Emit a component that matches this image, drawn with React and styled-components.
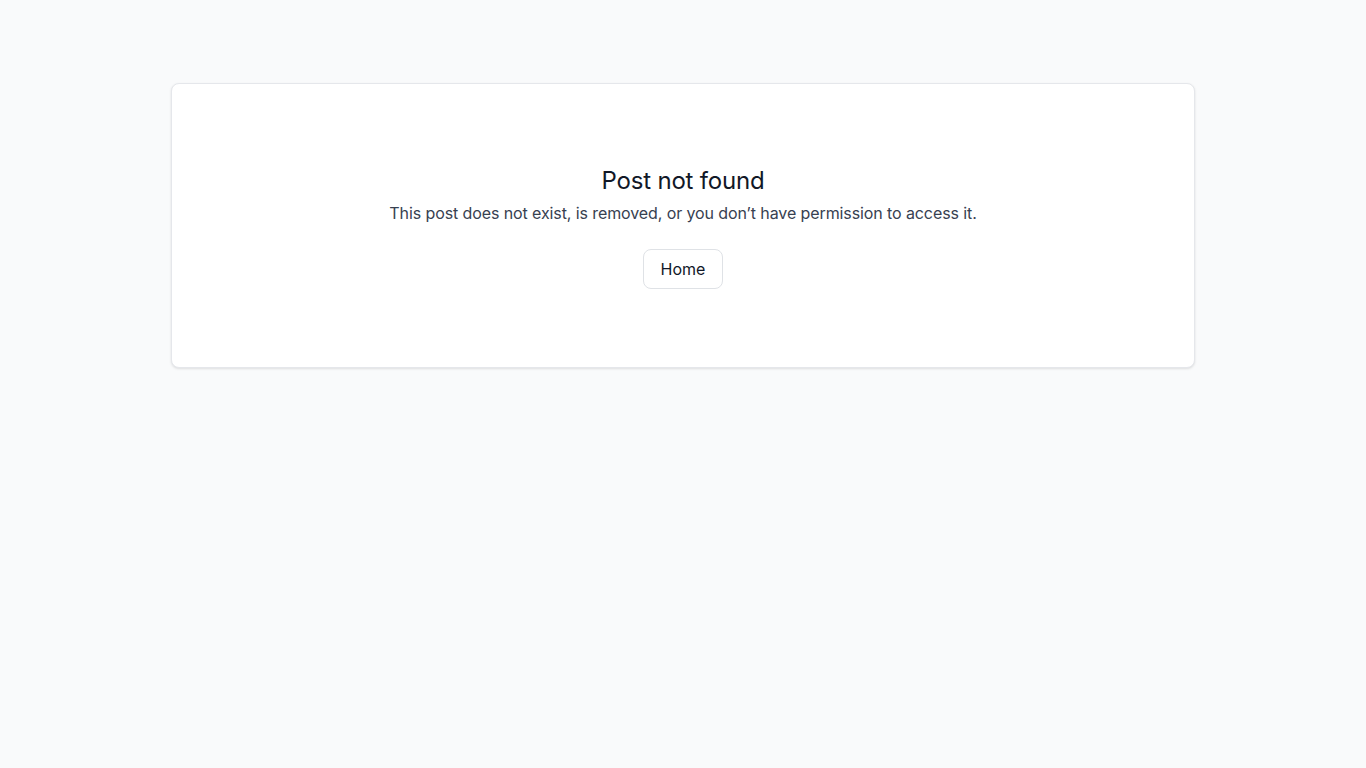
import React from "react";
import styled, { createGlobalStyle } from "styled-components";

const GlobalStyle = createGlobalStyle`
  * {
    box-sizing: border-box;
  }

  html,
  body {
    margin: 0;
    background: #f9fafb;
    font-family: Inter, "Noto Sans", sans-serif;
    color: #111827;
  }
`;

const App = () => {
  return (
    <>
      <GlobalStyle />
      <Page>
        <Card>
          <Title>Post not found</Title>
          <Message>
            This post does not exist, is removed, or you don’t have permission
            to access it.
          </Message>
          <HomeButton type="button">Home</HomeButton>
        </Card>
      </Page>
    </>
  );
};

export default App;

const Page = styled.div`
  min-height: 100vh;
  padding-top: 83px;
  display: flex;
  justify-content: center;
  align-items: flex-start;
`;

const Card = styled.div`
  width: 1024px;
  background: #ffffff;
  border: 1px solid #e5e7eb;
  border-radius: 8px;
  box-shadow: 0 1px 3px rgba(0, 0, 0, 0.08), 0 1px 2px rgba(0, 0, 0, 0.04);
  padding: 81px 24px 78px;
  display: flex;
  flex-direction: column;
  align-items: center;
`;

const Title = styled.h1`
  margin: 0;
  font-size: 24px;
  line-height: 32px;
  font-weight: 400;
  letter-spacing: -0.2px;
  color: #111827;
`;

const Message = styled.p`
  margin: 4px 0 0;
  font-size: 16px;
  line-height: 24px;
  letter-spacing: -0.1px;
  color: #374151;
`;

const HomeButton = styled.button`
  margin-top: 24px;
  height: 40px;
  padding: 0 16.5px;
  background: #ffffff;
  border: 1px solid #dfe2e6;
  border-radius: 8px;
  font-family: inherit;
  font-size: 16px;
  font-weight: 400;
  color: #111827;
  cursor: pointer;
`;
